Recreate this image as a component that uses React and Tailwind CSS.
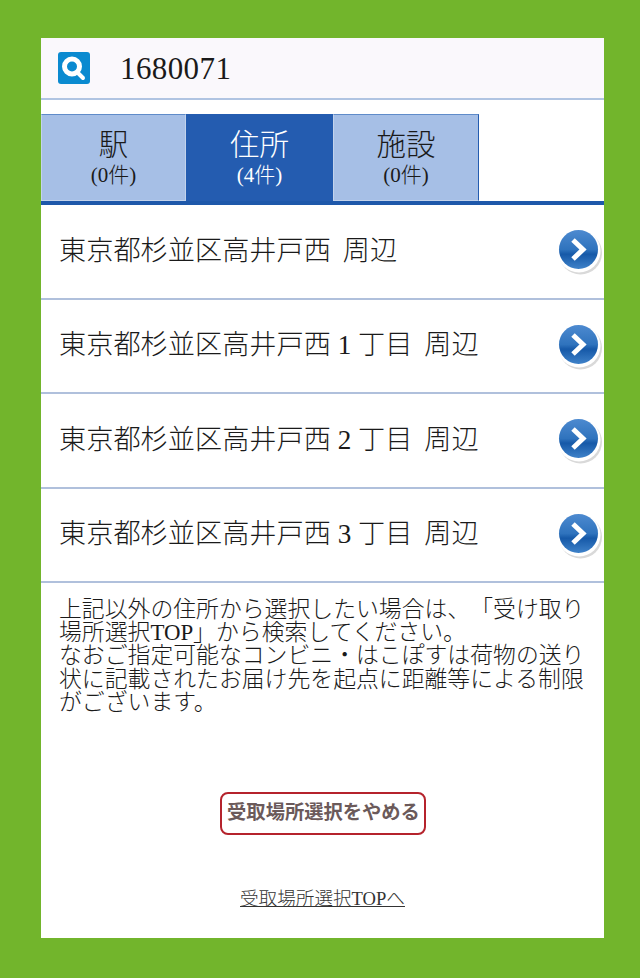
const serif = { fontFamily: '"Liberation Serif", "Noto Sans CJK JP", serif' };

function Arrow() {
  return (
    <svg width="46" height="46" viewBox="0 0 46 46" className="mt-[2px] shrink-0">
      <defs>
        <linearGradient id="ag" x1="0" y1="0" x2="0" y2="1">
          <stop offset="0" stopColor="#4d8ad0" />
          <stop offset="0.5" stopColor="#2f73bd" />
          <stop offset="0.62" stopColor="#1659a8" />
          <stop offset="1" stopColor="#3f82c9" />
        </linearGradient>
      </defs>
      <circle cx="23.5" cy="24" r="21.5" fill="#d9d9d9" />
      <circle cx="22" cy="22" r="21.5" fill="#ffffff" />
      <circle cx="21.5" cy="20.5" r="19.5" fill="url(#ag)" />
      <path d="M16 11 L26 20.5 L16 30" fill="none" stroke="#fff" strokeWidth="5" strokeLinejoin="miter" strokeLinecap="butt" />
    </svg>
  );
}

function Row({ children, tail }) {
  return (
    <div className="flex h-[94.5px] items-center justify-between border-b-2 border-[#b0c0dc] pl-[18px] pr-[1px]">
      <span className="text-[27.2px] leading-none whitespace-pre text-[#1a1a1a]">
        {children}
        <span className="ml-[5px]">{tail}</span>
      </span>
      <Arrow />
    </div>
  );
}

function Tab({ label, count, active, last, w }) {
  return (
    <div
      className={`flex h-[87px] flex-col items-center border ${w} ${active ? "border-[#245cb0] bg-[#245cb0] text-white" : "border-[#c3d3ec] border-t-[#5f8bc9] bg-[#a6bfe6] text-[#1a1a1a]"} ${last ? "border-r-[#245cb0]" : ""}`}
    >
      <span className="mt-[13px] text-[29.5px] leading-[34px]">{label}</span>
      <span className="mt-[1px] text-[21px] leading-[24px]">{count}</span>
    </div>
  );
}

export default function App() {
  return (
    <div style={serif} className="h-[978px] w-[640px] overflow-hidden bg-[#72b52c] pb-[40px] pl-[41px] pr-[36px] pt-[38px] font-light [text-spacing-trim:space-all]">
      <div className="h-[900px] bg-white">
        <div className="flex h-[62px] items-center border-b-2 border-[#b0c4e2] bg-[#faf8fc] pl-[17px]">
          <svg width="32" height="32" viewBox="0 0 32 32">
            <rect width="32" height="32" rx="3" fill="#0a8ad0" />
            <circle cx="14" cy="14.5" r="7.5" fill="none" stroke="#fff" strokeWidth="5" />
            <path d="M20 21 L25 26" stroke="#fff" strokeWidth="4" strokeLinecap="round" />
          </svg>
          <span className="ml-[30px] text-[31px] leading-none tracking-[0.4px] text-[#1a1a1a]">1680071</span>
        </div>
        <div className="mt-[14px] flex border-b-4 border-[#1e58aa]">
          <Tab label="駅" count="(0件)" w="w-[145px]" />
          <Tab label="住所" count="(4件)" active w="w-[147px]" />
          <Tab label="施設" count="(0件)" last w="w-[146px]" />
        </div>
        <Row tail="周辺">東京都杉並区高井戸西 </Row>
        <Row tail="周辺">東京都杉並区高井戸西 1 丁目 </Row>
        <Row tail="周辺">東京都杉並区高井戸西 2 丁目 </Row>
        <Row tail="周辺">東京都杉並区高井戸西 3 丁目 </Row>
        <p className="mt-[15px] pl-[18px] pr-[16px] text-[22.85px] leading-[23.2px] text-[#1a1a1a]">
          上記以外の住所から選択したい場合は、「受け取り場所選択TOP」から検索してください。
          <br />
          なおご指定可能なコンビニ・はこぽすは荷物の送り状に記載されたお届け先を起点に距離等による制限がございます。
        </p>
        <div className="mt-[78px] flex justify-center">
          <div className="flex h-[43px] w-[206px] items-center justify-center rounded-[8px] border-2 border-[#b5232c] pl-[2px] text-[19.3px] font-bold text-[#6b5a5a]">
            受取場所選択をやめる
          </div>
        </div>
        <div className="mt-[52px] flex justify-center">
          <a className="text-[18.6px] leading-[24px] text-[#333333] underline">受取場所選択TOPへ</a>
        </div>
      </div>
    </div>
  );
}
